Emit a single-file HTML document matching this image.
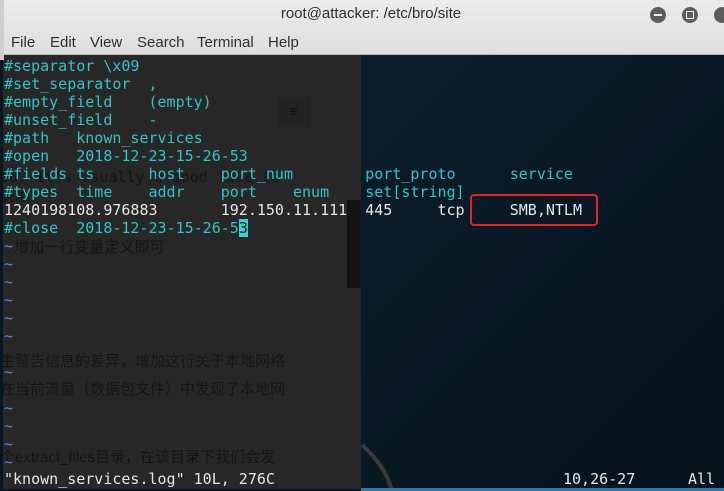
<!DOCTYPE html>
<html><head><meta charset="utf-8"><style>
body{margin:0;width:724px;height:491px;overflow:hidden;background:#071722;position:relative;font-family:"DejaVu Sans Mono",monospace}
.tb{position:absolute;left:0;top:0;width:724px;height:54px;background:linear-gradient(#ececec,#dedede);border-bottom:1px solid #b8b8b8}
.edge{position:absolute;left:0;top:0;width:4px;height:491px;background:#cfcfcf}
.title{position:absolute;left:0;width:724px;top:5px;text-align:center;font:15px "Liberation Sans",sans-serif;color:#2e2e2e;padding-left:18px;box-sizing:border-box}
.menu{position:absolute;top:34px;font:15px "Liberation Sans",sans-serif;color:#2e2e2e}
.btn{position:absolute;top:7px;width:16px;height:16px;border-radius:50%;background:#5c5c5c}
.left{position:absolute;left:3px;top:55px;width:358px;height:434px;background:#272727}
.sb{position:absolute;left:347px;top:200px;width:14px;height:88px;background:#141414}
.right{position:absolute;left:361px;top:55px;width:363px;height:434px;background:linear-gradient(135deg,#0b1d2a,#06131d)}
.l{position:absolute;left:4px;font-size:15px;line-height:18px;white-space:pre;color:#2fc5c9}
.w{color:#e6e6e6}
.t{color:#5a86d8}
.g{position:absolute;font:15px "Liberation Sans","Noto Sans CJK SC",sans-serif;color:#111;white-space:pre;opacity:.8}
.box{position:absolute;left:470px;top:194px;width:124px;height:28px;border:2.5px solid #e8221e;border-radius:4px}
</style></head><body>
<div class="left"></div><div class="right"></div><div class="sb"></div>
<div style="position:absolute;left:278px;top:97px;width:32px;height:30px;background:#232323;border-radius:3px"></div>
<div style="position:absolute;left:289px;top:108px;color:#111;font-size:14px;line-height:8px">≡</div>
<svg style="position:absolute;left:340px;top:400px" width="80" height="91"><path d="M22 45 Q45 65 52 91" stroke="#3a3a3a" stroke-width="4" fill="none"/></svg>
<div style="position:absolute;left:361px;top:488px;width:363px;height:3px;background:#2a7ab0"></div>
<div class="g" style="left:0;top:168px;font-family:'DejaVu Sans Mono',monospace">ed. It's usually a good idea to</div>
<div class="g" style="left:0;top:186px">影响</div>
<div class="g" style="left:6px;top:236px">, 增加一行变量定义即可</div>
<div class="g" style="left:0;top:350px">生警告信息的差异，增加这行关于本地网络</div>
<div class="g" style="left:0;top:378px">在当前流量（数据包文件）中发现了本地网</div>
<div class="g" style="left:0;top:446px">个extract_files目录，在该目录下我们会发</div>
<div class="l" style="top:57px">#separator \x09
#set_separator  ,
#empty_field    (empty)
#unset_field    -
#path   known_services
#open   2018-12-23-15-26-53
#fields ts      host    port_num        port_proto      service
#types  time    addr    port    enum    set[string]
<span class="w">1240198108.976883       192.150.11.111  445     tcp     SMB,NTLM</span>
#close  2018-12-23-15-26-5<span style="background:#2fd6d6;color:#111">3</span>
<span class="t">~
~
~
~
~
~

~

~
~
~
~</span></div>
<div class="l w" style="top:470px;left:4px">"known_services.log" 10L, 276C</div>
<div class="l w" style="top:470px;left:563px">10,26-27</div>
<div class="l w" style="top:470px;left:688px">All</div>
<div class="box"></div>
<div class="tb"></div><div class="edge" style="height:60px"></div>
<div class="title">root@attacker: /etc/bro/site</div>
<div class="menu" style="left:11px">File</div>
<div class="menu" style="left:50px">Edit</div>
<div class="menu" style="left:90px">View</div>
<div class="menu" style="left:137px">Search</div>
<div class="menu" style="left:197px">Terminal</div>
<div class="menu" style="left:268px">Help</div>
<div class="btn" style="left:650px"><div style="position:absolute;left:4px;top:7px;width:8px;height:2px;background:#eee"></div></div>
<div class="btn" style="left:682px"><div style="position:absolute;left:4px;top:4px;width:6px;height:6px;border:1px solid #eee"></div></div>
<div class="btn" style="left:714px"></div>
</body></html>
